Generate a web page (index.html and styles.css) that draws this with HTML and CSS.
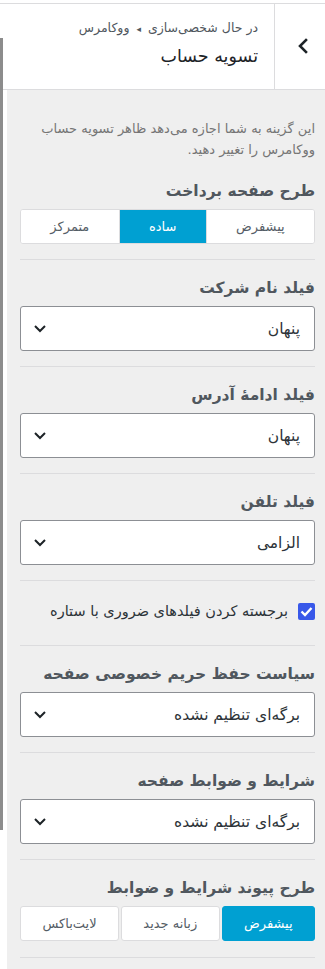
FILE: index.html
```html
<!DOCTYPE html>
<html lang="fa" dir="rtl">
<head>
<meta charset="utf-8">
<title>تسویه حساب</title>
<link rel="stylesheet" href="styles.css">
</head>
<body>
<div class="edge-bar"></div>
<header class="section-head">
  <button class="back" type="button" aria-label="بازگشت">
    <svg width="12" height="16" viewBox="0 0 12 16"><path d="M9 2 L3 8 L9 14" fill="none" stroke="#1d2327" stroke-width="2.6" stroke-linecap="square"/></svg>
  </button>
  <div class="head-text">
    <span class="crumb">در حال شخصی‌سازی <span class="tri">◂</span> ووکامرس</span>
    <h2 class="title">تسویه حساب</h2>
  </div>
</header>
<main class="panel">
  <p class="desc">این گزینه به شما اجازه می‌دهد ظاهر تسویه حساب ووکامرس را تغییر دهید.</p>
  <ul class="controls">
    <li class="control first">
      <h3 class="label">طرح صفحه برداخت</h3>
      <div class="seg">
        <span class="seg-btn">پیشفرض</span>
        <span class="seg-btn on">ساده</span>
        <span class="seg-btn">متمرکز</span>
      </div>
    </li>
    <li class="control">
      <h3 class="label">فیلد نام شرکت</h3>
      <div class="select"><span>پنهان</span><svg width="14" height="9" viewBox="0 0 14 9"><path d="M2 2 L7 7 L12 2" fill="none" stroke="#1d2327" stroke-width="2"/></svg></div>
    </li>
    <li class="control">
      <h3 class="label">فیلد ادامهٔ آدرس</h3>
      <div class="select"><span>پنهان</span><svg width="14" height="9" viewBox="0 0 14 9"><path d="M2 2 L7 7 L12 2" fill="none" stroke="#1d2327" stroke-width="2"/></svg></div>
    </li>
    <li class="control">
      <h3 class="label">فیلد تلفن</h3>
      <div class="select"><span>الزامی</span><svg width="14" height="9" viewBox="0 0 14 9"><path d="M2 2 L7 7 L12 2" fill="none" stroke="#1d2327" stroke-width="2"/></svg></div>
    </li>
    <li class="control check-row">
      <label class="check">
        <span class="box"><svg width="13" height="11" viewBox="0 0 13 11"><path d="M1.5 5.5 L5 9 L11.5 2" fill="none" stroke="#fff" stroke-width="2.4"/></svg></span>
        <span class="check-text">برجسته کردن فیلدهای ضروری با ستاره</span>
      </label>
    </li>
    <li class="control">
      <h3 class="label">سیاست حفظ حریم خصوصی صفحه</h3>
      <div class="select"><span>برگه‌ای تنظیم نشده</span><svg width="14" height="9" viewBox="0 0 14 9"><path d="M2 2 L7 7 L12 2" fill="none" stroke="#1d2327" stroke-width="2"/></svg></div>
    </li>
    <li class="control">
      <h3 class="label">شرایط و ضوابط صفحه</h3>
      <div class="select"><span>برگه‌ای تنظیم نشده</span><svg width="14" height="9" viewBox="0 0 14 9"><path d="M2 2 L7 7 L12 2" fill="none" stroke="#1d2327" stroke-width="2"/></svg></div>
    </li>
    <li class="control last">
      <h3 class="label">طرح پیوند شرایط و ضوابط</h3>
      <div class="seg split">
        <span class="seg-btn on">پیشفرض</span>
        <span class="seg-btn">زبانه جدید</span>
        <span class="seg-btn">لایت‌باکس</span>
      </div>
    </li>
  </ul>
</main>
</body>
</html>
```
FILE: styles.css
```css
html, body {
  margin: 0;
  padding: 0;
  background: #ffffff;
}
body {
  font-family: "DejaVu Sans", "Noto Sans", sans-serif;
  color: #3c434a;
  width: 325px;
  min-height: 969px;
  position: relative;
}
.edge-bar {
  position: absolute;
  left: 0;
  top: 38px;
  width: 3px;
  height: 792px;
  background: #8c8c8c;
  z-index: 2;
}
.section-head {
  display: flex;
  margin-top: 3px;
  border-top: 1px solid #dcdcde;
  border-bottom: 1px solid #dcdcde;
  height: 85px;
  background: #fff;
}
.back {
  width: 51px;
  flex: 0 0 51px;
  border: 0;
  border-left: 1px solid #dcdcde;
  background: #fff;
  padding: 0;
  margin: 0;
  display: flex;
  align-items: center;
  justify-content: center;
}
.back svg { margin-right: -6px; margin-top: -1px; }
.head-text {
  flex: 1;
  padding-right: 16px;
  display: flex;
  flex-direction: column;
}
.crumb {
  font-size: 12.5px;
  color: #50575e;
  margin-top: 16px;
  line-height: 16px;
}
.tri { font-size: 9px; padding: 0 3px; }
.title {
  margin: 6px 0 0;
  font-size: 17.5px;
  font-weight: normal;
  color: #1d2327;
  line-height: 26px;
}
.panel {
  margin-left: 7px;
  background: #efefef;
  padding: 28px 10px 16px 13px;
  min-height: 850px;
  box-sizing: border-box;
}
.desc {
  margin: 0 0 3px;
  font-size: 13px;
  line-height: 21px;
  color: #757575;
}
.controls {
  list-style: none;
  margin: 0;
  padding: 0;
}
.control {
  border-top: 1px solid #dcdcde;
  padding: 15px 0 15px;
}
.control.first { border-top: 0; }
.control.last { border-bottom: 1px solid #dcdcde; padding-bottom: 16px; }
.label {
  margin: 0 0 5px;
  font-size: 15.5px;
  line-height: 26px;
  font-weight: bold;
  color: #50575e;
}
.seg {
  display: flex;
  height: 35px;
  background: #fff;
  border: 1px solid #dcdcde;
  border-radius: 3px;
  box-sizing: border-box;
  overflow: hidden;
}
.seg-btn {
  flex: 1 1 auto;
  display: flex;
  align-items: center;
  justify-content: center;
  font-size: 13px;
  color: #555d66;
  background: #fff;
  border-left: 1px solid #dcdcde;
}
.seg-btn:last-child { border-left: 0; }
.seg-btn.on {
  background: #00a0d2;
  color: #fff;
}
.seg.split { border: 0; background: transparent; gap: 2px; overflow: visible; }
.seg.split .seg-btn {
  border: 1px solid #dcdcde;
  border-radius: 3px;
}
.seg.split .seg-btn.on { border-color: #00a0d2; }
.select {
  height: 45px;
  box-sizing: border-box;
  background: #fff;
  border: 1px solid #8c8f94;
  border-radius: 3px;
  display: flex;
  align-items: center;
  justify-content: space-between;
  padding: 0 14px 0 12px;
  font-size: 15.5px;
  color: #2c3338;
}
.check-row { padding: 15px 0 19px; }
.check {
  display: flex;
  align-items: center;
  height: 30px;
  gap: 10px;
}
.box {
  width: 17px;
  height: 17px;
  background: #3858e9;
  border-radius: 2px;
  display: flex;
  align-items: center;
  justify-content: center;
}
.check-text {
  font-size: 14.5px;
  color: #2c3338;
}
```
